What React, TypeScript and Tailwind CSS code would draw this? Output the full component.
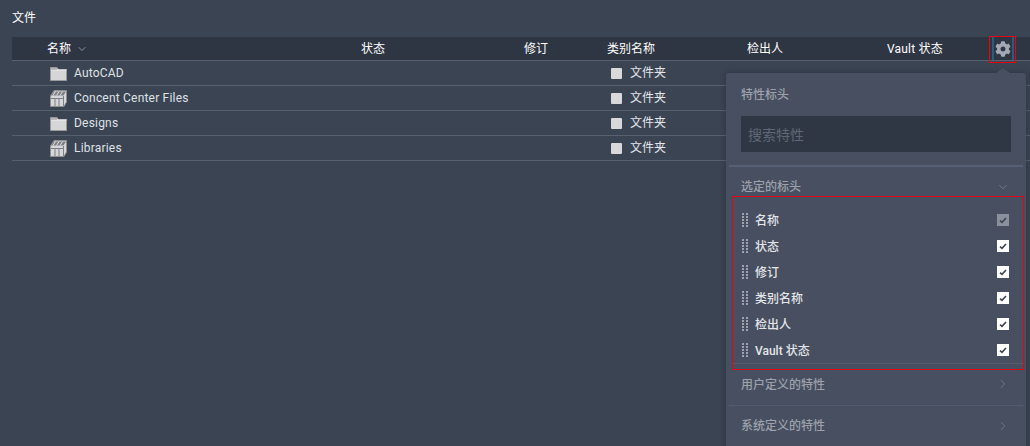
import { FaCog } from "react-icons/fa";
import { ChevronDown, ChevronRight } from "lucide-react";

const rows = [
  { name: "AutoCAD", kind: "folder" },
  { name: "Concent Center Files", kind: "library" },
  { name: "Designs", kind: "folder" },
  { name: "Libraries", kind: "library" },
];

const headers = ["名称", "状态", "修订", "类别名称", "检出人", "Vault 状态"];

function FolderIcon() {
  return (
    <svg width="17" height="15" viewBox="0 0 17 15" className="shrink-0">
      <path d="M0.5 1.5h6.5l1.5 2h8v11h-16z" fill="#d6d6d6" stroke="#9a9a9a" />
      <path d="M1 4h15.5" stroke="#f0f0f0" />
      <path d="M1 3h6" stroke="#8f8f8f" />
    </svg>
  );
}

function LibraryIcon() {
  return (
    <svg width="17" height="17" viewBox="0 0 17 17" className="shrink-0">
      <path d="M0.5 6 L4 0.5 H16.5 V12 L14 16.5 H0.5 Z" fill="#d6d6d6" stroke="#8f8f8f" />
      <path d="M1 5.5 L4 1.5 H16 L13.5 5.5 Z" fill="#7b7e84" />
      <path d="M5.5 1.5 L3 5.5 M9 1.5 L6.5 5.5 M12.5 1.5 L10 5.5" stroke="#e4e4e4" />
      <path d="M1 8.5H13.5" stroke="#7b7e84" />
      <path d="M5 8v8M9 8v8M13.5 6v10" stroke="#7b7e84" />
    </svg>
  );
}

function Check({ disabled }: { disabled?: boolean }) {
  return (
    <span className={`flex h-[12px] w-[12px] items-center justify-center ${disabled ? "bg-[#8a909c]" : "bg-white"}`}>
      <svg width="8" height="7" viewBox="0 0 8 7">
        <path d="M1 3.6 L3 5.4 L7 1" fill="none" stroke="#3b4453" strokeWidth="1.6" />
      </svg>
    </span>
  );
}

function Grip() {
  return (
    <span className="grid w-[6px] grid-cols-2 gap-x-[2px] gap-y-[1px]">
      {Array.from({ length: 10 }).map((_, i) => (
        <span key={i} className="h-[2px] w-[2px] bg-[#9ea4af]" />
      ))}
    </span>
  );
}

function PropertyPopover() {
  return (
    <div className="absolute left-[726px] top-[73px] h-[400px] w-[300px] rounded-t-[3px] bg-[#474f60] shadow-[0_0_6px_rgba(0,0,0,0.25)]">
      <span className="absolute left-[270px] top-[-5px] h-0 w-0 border-x-[7px] border-b-[5px] border-x-transparent border-b-[#474f60]" />
      <div className="px-[15px] pt-[14px]">
        <div className="text-[12px] font-medium leading-[16px] text-[#9ca1ac]">特性标头</div>
        <div className="mt-[13px] flex h-[36px] items-center bg-[#2f3744] px-[7px] pt-[2px] text-[14px] text-[#5f6775]">搜索特性</div>
      </div>
      <div className="mx-[3px] mt-[13px] h-[2px] bg-[#566074]" />
      <div className="flex h-[29px] items-start justify-between pl-[15px] pr-[16px] pt-[12px] text-[12px] font-medium leading-[16px] text-[#9ca1ac]">
        <span>选定的标头</span>
        <ChevronDown size={14} strokeWidth={1.5} className="mt-[1px] text-[#767d8c]" />
      </div>
      <div className="ml-[6px] mr-[2px] h-[174px] border border-[#e30613] pt-[10px]">
        {headers.map((h, i) => (
          <div key={h} className="flex h-[26px] items-center pl-[9px] pr-[14px]">
            <Grip />
            <span className="ml-[7px] flex-1 pt-[1px] text-[12px] font-medium text-[#e4e6ea]">{h}</span>
            <Check disabled={i === 0} />
          </div>
        ))}
        <div className="h-[1px] bg-[#525b6d]" />
      </div>
      <div className="flex h-[35px] items-start justify-between pl-[15px] pr-[16px] pt-[7px] text-[12px] font-medium leading-[16px] text-[#9ca1ac]">
        <span>用户定义的特性</span>
        <ChevronRight size={14} strokeWidth={1.5} className="text-[#767d8c]" />
      </div>
      <div className="mx-[3px] h-[1px] bg-[#525b6d]" />
      <div className="flex h-[40px] items-start justify-between pl-[15px] pr-[16px] pt-[12px] text-[12px] font-medium leading-[16px] text-[#9ca1ac]">
        <span>系统定义的特性</span>
        <ChevronRight size={14} strokeWidth={1.5} className="mt-[1px] text-[#767d8c]" />
      </div>
      <div className="mx-[3px] h-[1px] bg-[#566074]" />
    </div>
  );
}

export default function App() {
  return (
    <div
      className="relative h-[446px] w-[1030px] overflow-hidden bg-[#3b4453] text-[12px] text-[#e4e6ea]"
      style={{ fontFamily: "Roboto, 'Noto Sans CJK SC', sans-serif" }}
    >
      <div className="h-[37px] pl-[12px] pt-[10px] leading-[16px] text-white">文件</div>
      <div className="ml-[12px]">
        <div className="flex h-[24px] items-center border-b border-[#56606f] bg-[#2e3643] text-white">
          <div className="flex w-[349px] items-center pl-[35px]">
            名称
            <ChevronDown size={12} strokeWidth={1.5} className="ml-[5px] text-[#b0b5be]" />
          </div>
          <div className="w-[163px]">状态</div>
          <div className="w-[83px]">修订</div>
          <div className="w-[140px]">类别名称</div>
          <div className="w-[140px]">检出人</div>
          <div className="w-[105px] tracking-[0.2px]">Vault 状态</div>
          <div className="relative flex h-[23px] w-[22px] items-center justify-center border-x-2 border-[#2d5b7c]">
            <FaCog size={16} className="text-[#a3a8b2]" />
            <span className="absolute left-[-5px] top-[-1px] h-[27px] w-[27px] border border-[#e30613]" />
          </div>
        </div>
        {rows.map((r) => (
          <div key={r.name} className="flex h-[25px] items-center border-b border-[#56606f]">
            <div className="flex w-[599px] items-center pl-[38px]">
              <span className="flex w-[24px] items-center">
                {r.kind === "folder" ? <FolderIcon /> : <LibraryIcon />}
              </span>
              <span className="tracking-[0.2px] text-[#dfe1e5]">{r.name}</span>
            </div>
            <span className="h-[11px] w-[11px] rounded-[1px] bg-[#d9d9d9]" />
            <span className="ml-[8px]">文件夹</span>
          </div>
        ))}
      </div>
      <PropertyPopover />
    </div>
  );
}
